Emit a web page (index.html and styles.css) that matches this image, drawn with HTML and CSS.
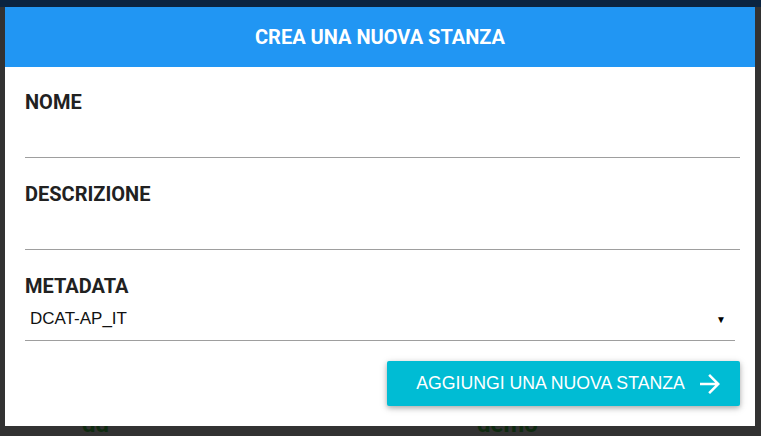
FILE: index.html
```html
<!DOCTYPE html>
<html lang="it">
<head>
<meta charset="utf-8">
<title>Crea una nuova stanza</title>
<link rel="stylesheet" href="styles.css">
</head>
<body>
<div class="topbar"></div>
<div class="backdrop">
  <div class="bg-item bg-dd">dd</div>
  <div class="bg-item bg-demo">demo</div>
</div>
<div class="dialog">
  <div class="dialog-header">CREA UNA NUOVA STANZA</div>
  <form class="dialog-body">
    <label class="field">
      <span class="field-label">NOME</span>
      <input class="field-input" type="text">
    </label>
    <label class="field">
      <span class="field-label">DESCRIZIONE</span>
      <input class="field-input" type="text">
    </label>
    <label class="field field-select">
      <span class="field-label">METADATA</span>
      <span class="select">
        <span class="select-value">DCAT-AP_IT</span>
        <span class="select-caret">&#9660;</span>
      </span>
    </label>
    <div class="actions">
      <button type="button" class="btn-add">
        <span>AGGIUNGI UNA NUOVA STANZA</span>
        <svg class="btn-icon" viewBox="0 0 24 24" width="30" height="30"><path fill="#fff" d="M12 4l-1.41 1.41L16.17 11H4v2h12.17l-5.58 5.59L12 20l8-8z"/></svg>
      </button>
    </div>
  </form>
</div>
</body>
</html>
```
FILE: styles.css
```css
html, body {
  margin: 0;
  padding: 0;
  height: 100%;
  overflow: hidden;
}
body {
  background: #323232;
  font-family: Roboto, "Liberation Sans", Arial, sans-serif;
  position: relative;
}
.topbar {
  height: 7px;
  background: #0b2440;
}
.backdrop {
  position: absolute;
  inset: 7px 0 0 0;
}
.bg-item {
  position: absolute;
  color: #0f2a10;
  font-weight: bold;
  font-size: 24px;
  line-height: 24px;
}
.bg-dd { left: 82px; top: 405px; }
.bg-demo { left: 477px; top: 405px; }
.dialog {
  position: absolute;
  left: 5px;
  top: 7px;
  width: 750px;
  height: 419px;
  background: #fff;
  display: flex;
  flex-direction: column;
}
.dialog-header {
  height: 60px;
  background: #2196f3;
  color: #fff;
  font-weight: bold;
  font-size: 20px;
  display: flex;
  align-items: center;
  justify-content: center;
}
.dialog-body {
  padding: 0 15px 0 20px;
  display: flex;
  flex-direction: column;
}
.field {
  display: flex;
  flex-direction: column;
}
.field-label {
  font-weight: bold;
  font-size: 20px;
  color: #212121;
  line-height: 24px;
  margin-top: 24px;
}
.field:first-child .field-label {
  margin-top: 23px;
}
.field-input {
  border: 0;
  border-bottom: 1px solid #9e9e9e;
  height: 44px;
  padding: 0;
  outline: none;
  font: inherit;
  box-sizing: border-box;
}
.select {
  display: flex;
  align-items: center;
  justify-content: space-between;
  height: 43px;
  border-bottom: 1px solid #9e9e9e;
  margin-right: 5px;
  box-sizing: border-box;
  padding: 0 9px 0 5px;
}
.select-value {
  font-family: "Liberation Sans", Arial, sans-serif;
  font-size: 17px;
  color: #111;
}
.select-caret {
  font-size: 10px;
  color: #000;
}
.actions {
  display: flex;
  justify-content: flex-end;
  margin-top: 20px;
}
.btn-add {
  width: 353px;
  height: 45px;
  border: 0;
  border-radius: 2px;
  background: #00bcd4;
  color: #fff;
  font-family: "Liberation Sans", Arial, sans-serif;
  font-size: 17.7px;
  display: flex;
  align-items: center;
  justify-content: center;
  gap: 10px;
  padding: 0 0 0 14px;
  box-shadow: 0 2px 5px rgba(0,0,0,0.26), 0 2px 10px rgba(0,0,0,0.12);
}
.btn-icon {
  display: block;
}
```
